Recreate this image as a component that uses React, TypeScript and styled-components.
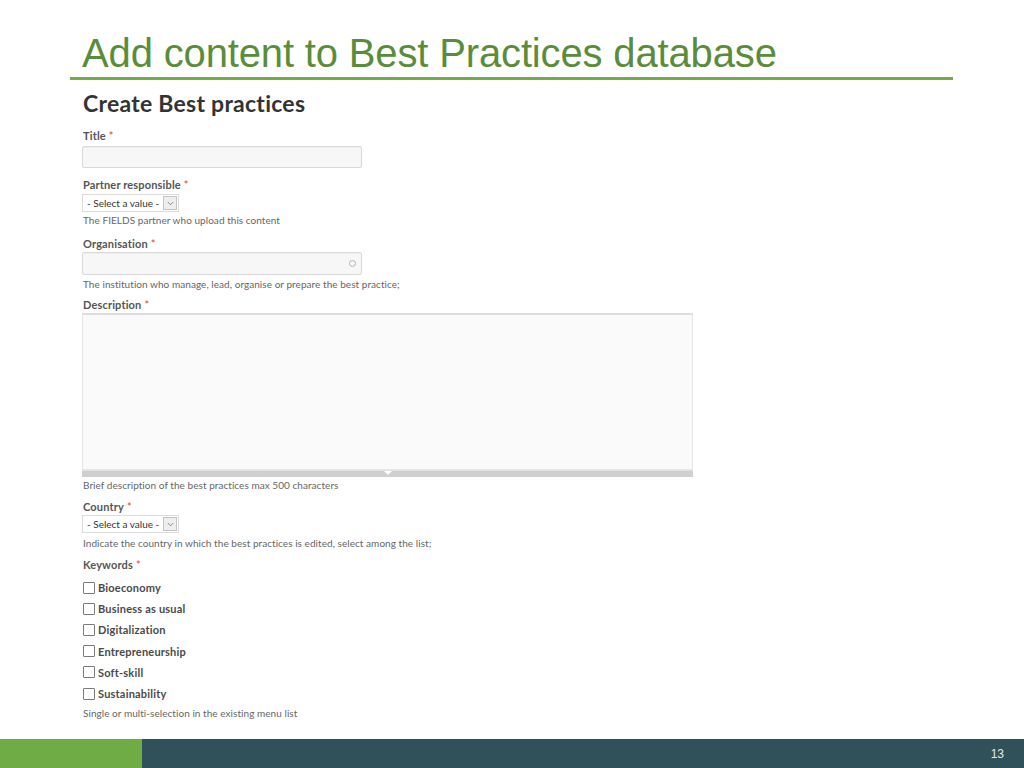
import React from "react";
import styled, { createGlobalStyle } from "styled-components";

const GlobalStyle = createGlobalStyle`
  html, body {
    margin: 0;
    padding: 0;
    background: #ffffff;
  }
  body {
    font-family: "Liberation Sans", Arial, sans-serif;
  }
`;

const Slide = styled.div`
  width: 1024px;
  height: 768px;
  display: flex;
  flex-direction: column;
  overflow: hidden;
  background: #ffffff;
`;

const Header = styled.header`
  padding: 30px 0 0 82px;
`;

const SlideTitle = styled.h1`
  margin: 0;
  font-family: "Liberation Sans", Arial, sans-serif;
  font-weight: normal;
  font-size: 40px;
  line-height: 47px;
  letter-spacing: -0.15px;
  color: #5a8d3a;
`;

const Rule = styled.div`
  margin-left: 70px;
  width: 883px;
  height: 3px;
  background: #70ad47;
`;

const Form = styled.form`
  display: flex;
  flex-direction: column;
  align-items: flex-start;
  padding-left: 82px;
  font-family: Lato, "Open Sans", sans-serif;
`;

const FormHeading = styled.h2`
  margin: 10px 0 0 1px;
  font-size: 23px;
  line-height: 26px;
  letter-spacing: 0.25px;
  font-weight: bold;
  color: #333333;
`;

const Label = styled.label<{ $mt: number }>`
  display: block;
  margin-top: ${(p) => p.$mt}px;
  margin-left: 1px;
  font-size: 11px;
  line-height: 14px;
  letter-spacing: 0.15px;
  font-weight: bold;
  color: #555555;
`;

const Required = styled.span`
  color: #e0413b;
  font-weight: normal;
  margin-left: 3px;
`;

const Help = styled.div<{ $mt: number }>`
  margin-top: ${(p) => p.$mt}px;
  margin-left: 1px;
  font-size: 10px;
  line-height: 12px;
  letter-spacing: 0.05px;
  color: #666666;
`;

const TextBox = styled.div<{ $mt: number; $h: number }>`
  position: relative;
  box-sizing: border-box;
  margin-top: ${(p) => p.$mt}px;
  width: 280px;
  height: ${(p) => p.$h}px;
  background: #f7f7f7;
  border: 1px solid #d9d9d9;
  border-radius: 2px;
  box-shadow: inset 0 1px 1px rgba(0, 0, 0, 0.04);
`;

const Throbber = styled.span`
  position: absolute;
  right: 5px;
  top: 7px;
  width: 5px;
  height: 5px;
  border: 1.5px solid #b4b4b4;
  border-radius: 50%;
`;

const Select = styled.div<{ $mt: number }>`
  display: flex;
  align-items: stretch;
  box-sizing: border-box;
  margin-top: ${(p) => p.$mt}px;
  width: 97px;
  height: 18px;
  background: #ffffff;
  border: 1px solid #dcdcdc;
`;

const SelectText = styled.span`
  flex: 1;
  padding-left: 4px;
  font-size: 10px;
  line-height: 16px;
  color: #333333;
  white-space: nowrap;
`;

const SelectArrow = styled.span`
  display: flex;
  align-items: center;
  justify-content: center;
  width: 14px;
  margin: 1px;
  background: #eeeeee;
  border: 1px solid #c4c4c4;
  box-sizing: border-box;
`;

const TextArea = styled.div<{ $mt: number }>`
  margin-top: ${(p) => p.$mt}px;
  width: 611px;
  display: flex;
  flex-direction: column;
`;

const TextAreaBody = styled.div`
  box-sizing: border-box;
  height: 157px;
  background: #fafafa;
  border: 1px solid #e6e6e6;
  border-top: 2px solid #dedede;
`;

const Grippie = styled.div`
  display: flex;
  justify-content: center;
  height: 7px;
  background: #cfcfcf;
  border-top: 1px solid #e2e2e2;
  box-sizing: border-box;
`;

const CheckList = styled.div<{ $mt: number }>`
  margin-top: ${(p) => p.$mt}px;
  display: flex;
  flex-direction: column;
`;

const CheckRow = styled.div`
  display: flex;
  align-items: center;
  gap: 3px;
  height: 21.2px;
  margin-left: 1px;
  font-size: 11px;
  letter-spacing: 0.2px;
  font-weight: bold;
  color: #4a4a4a;
`;

const Box = styled.span`
  box-sizing: border-box;
  width: 12px;
  height: 12px;
  border: 1px solid #7a7a7a;
  border-radius: 1px;
  background: #ffffff;
`;

const Footer = styled.footer`
  margin-top: auto;
  height: 29px;
  display: flex;
`;

const FooterAccent = styled.div`
  width: 142px;
  background: #6fac46;
`;

const FooterBar = styled.div`
  flex: 1;
  display: flex;
  align-items: center;
  justify-content: flex-end;
  padding-right: 20px;
  background: #30505a;
  font-family: "Liberation Sans", Arial, sans-serif;
  font-size: 12px;
  color: #e8e8e8;
`;

const Chevron = () => (
  <svg width="7" height="5" viewBox="0 0 7 5">
    <path d="M0.8 1 L3.5 3.8 L6.2 1" fill="none" stroke="#8a8a8a" strokeWidth="1" />
  </svg>
);

const GripArrow = () => (
  <svg width="8" height="5" viewBox="0 0 8 5">
    <path d="M0 0 L8 0 L4 4 Z" fill="#ffffff" />
  </svg>
);

const keywords = [
  "Bioeconomy",
  "Business as usual",
  "Digitalization",
  "Entrepreneurship",
  "Soft-skill",
  "Sustainability",
];

const SelectValue = ({ mt }: { mt: number }) => (
  <Select $mt={mt}>
    <SelectText>- Select a value -</SelectText>
    <SelectArrow>
      <Chevron />
    </SelectArrow>
  </Select>
);

export default function App() {
  return (
    <>
      <GlobalStyle />
      <Slide>
        <Header>
          <SlideTitle>Add content to Best Practices database</SlideTitle>
        </Header>
        <Rule />
        <Form>
          <FormHeading>Create Best practices</FormHeading>

          <Label $mt={13}>
            Title<Required>*</Required>
          </Label>
          <TextBox $mt={3} $h={22} />

          <Label $mt={10}>
            Partner responsible<Required>*</Required>
          </Label>
          <SelectValue mt={2} />
          <Help $mt={2}>The FIELDS partner who upload this content</Help>

          <Label $mt={11}>
            Organisation<Required>*</Required>
          </Label>
          <TextBox $mt={1} $h={23}>
            <Throbber />
          </TextBox>
          <Help $mt={3}>The institution who manage, lead, organise or prepare the best practice;</Help>

          <Label $mt={8}>
            Description<Required>*</Required>
          </Label>
          <TextArea $mt={1}>
            <TextAreaBody />
            <Grippie>
              <GripArrow />
            </Grippie>
          </TextArea>
          <Help $mt={2}>Brief description of the best practices max 500 characters</Help>

          <Label $mt={9}>
            Country<Required>*</Required>
          </Label>
          <SelectValue mt={1} />
          <Help $mt={4}>Indicate the country in which the best practices is edited, select among the list;</Help>

          <Label $mt={9}>
            Keywords<Required>*</Required>
          </Label>
          <CheckList $mt={5}>
            {keywords.map((k) => (
              <CheckRow key={k}>
                <Box />
                {k}
              </CheckRow>
            ))}
          </CheckList>
          <Help $mt={3}>Single or multi-selection in the existing menu list</Help>
        </Form>
        <Footer>
          <FooterAccent />
          <FooterBar>13</FooterBar>
        </Footer>
      </Slide>
    </>
  );
}
